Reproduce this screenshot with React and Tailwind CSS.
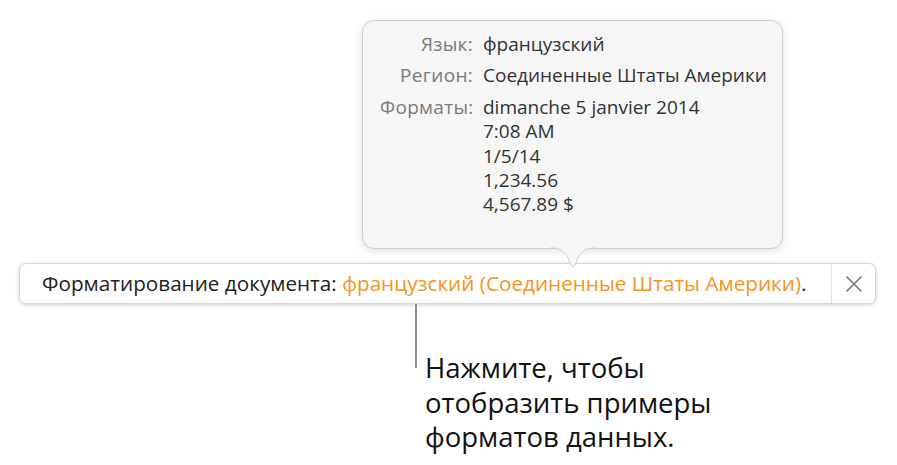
const font = { fontFamily: '"Open Sans", "Liberation Sans", sans-serif' }

const rows = [
  { label: 'Язык:', values: ['французский'] },
  { label: 'Регион:', values: ['Соединенные Штаты Америки'] },
  { label: 'Форматы:', values: ['dimanche 5 janvier 2014', '7:08 AM', '1/5/14', '1,234.56', '4,567.89 $'] },
]

function Popover() {
  return (
    <div className="absolute left-[362px] top-[20px] z-10 w-[421px] h-[229px] rounded-[12px] border border-[#cfcfcf] bg-[#f6f6f6] shadow-[0_2px_10px_rgba(0,0,0,0.12)]">
      <div className="grid grid-cols-[93px_auto] gap-x-[10px] gap-y-[7px] pl-[17px] pt-[11px] text-[19px] leading-[24.4px]">
        {rows.map((row) => (
          <div key={row.label} className="contents">
            <div className="text-right text-[#7a7a7a] tracking-[0.3px]">{row.label}</div>
            <div className="text-[#333333]">
              {row.values.map((v) => (
                <div key={v}>{v}</div>
              ))}
            </div>
          </div>
        ))}
      </div>
      <svg
        className="absolute left-[187px] top-[226px]"
        width="46"
        height="22"
        viewBox="0 0 46 22"
      >
        <path d="M0 1 L2 1 C10 1 14 4 18 11 L21 18 C22 20 24 20 25 18 L28 11 C32 4 36 1 44 1 L46 1 L46 0 L0 0 Z" fill="#f6f6f6" />
        <path d="M0 1 L2 1 C10 1 14 4 18 11 L21 18 C22 20 24 20 25 18 L28 11 C32 4 36 1 44 1 L46 1" fill="none" stroke="#cfcfcf" strokeWidth="1" />
      </svg>
    </div>
  )
}

export default function App() {
  return (
    <div className="relative w-[897px] h-[465px] bg-white overflow-hidden" style={font}>
      <Popover />
      <div className="pt-[263px] pl-[19px]">
        <div className="flex h-[41px] w-[857px] items-stretch rounded-[7px] border border-[#d6d6d6] bg-white shadow-[0_1px_4px_rgba(0,0,0,0.18)]">
          <div className="flex flex-1 items-center pl-[22px] text-[20.7px] text-[#222222]">
            <span>Форматирование документа:&nbsp;</span>
            <span className="text-[#f7941d]">французский (Соединенные Штаты Америки)</span>
            <span>.</span>
          </div>
          <div className="flex w-[44px] items-center justify-center border-l border-[#e2e2e2]">
            <svg width="16" height="16" viewBox="0 0 16 16">
              <path d="M1 1 L15 15 M15 1 L1 15" stroke="#7a7a7a" strokeWidth="1.7" strokeLinecap="round" />
            </svg>
          </div>
        </div>
        <div className="flex">
          <div className="ml-[396px] h-[64px] w-[2px] bg-[#8e8e8e]" />
          <div className="ml-[8px] mt-[47px] text-[27.5px] leading-[34.5px] text-[#111111]">
            Нажмите, чтобы
            <br />
            отобразить примеры
            <br />
            форматов данных.
          </div>
        </div>
      </div>
    </div>
  )
}
